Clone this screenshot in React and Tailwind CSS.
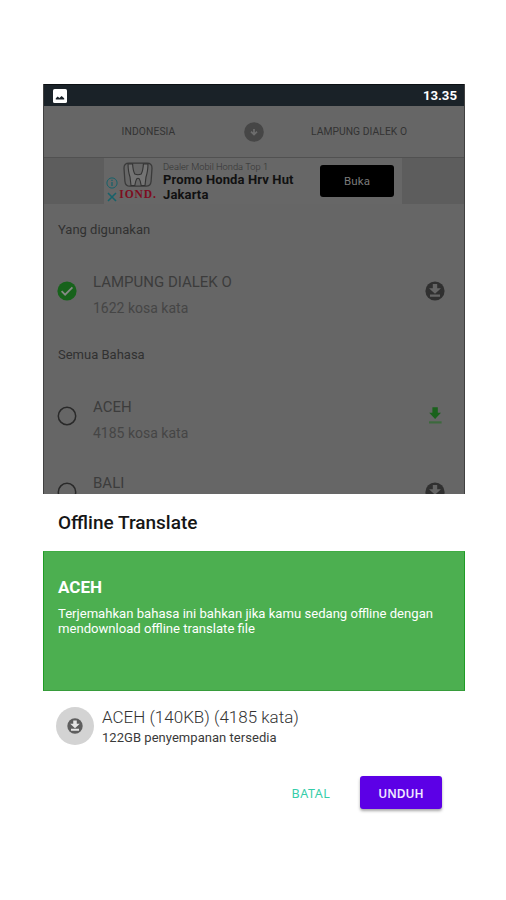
const languages = [
  { name: "ACEH", words: "4185 kosa kata", icon: "arrow" },
  { name: "BALI", icon: "circle" },
];

function DownloadCircle({ className, arrow }) {
  return (
    <svg viewBox="0 0 20 20" className={className}>
      <circle cx="10" cy="10" r="9.6" fill="currentColor" />
      <path
        d="M7.8 3h4.4v4.200h3.800L10 12.800 4 7.200h3.800zM5 13.400h10v2.400H5z"
        fill={arrow}
      />
    </svg>
  );
}

function DownloadArrow() {
  return (
    <svg viewBox="0 0 20 20" className="h-5 w-5">
      <path d="M7.4 1.2h5.4v5.6h3.2l-5.9 6.3-5.9-6.3h3.2z" fill="#1a621c" />
      <path d="M4 15.3h12.6v2.2H4z" fill="#3c693d" />
    </svg>
  );
}

function StatusBar() {
  return (
    <div className="flex h-[22px] items-center justify-between border-t border-[#0c1013] bg-[#1a2228] pr-[7px] pl-[9px]">
      <svg viewBox="0 0 14 14" className="h-[14px] w-[14px]">
        <rect width="14" height="14" rx="1.6" fill="#fff" />
        <path
          d="M2.8 10.4V9.2l1.9-1.6 1.7 1.3L8.6 7l2.6 2.2v1.2z"
          fill="#1a2228"
        />
      </svg>
      <span className="text-[13.2px] leading-[22px] font-bold text-white">
        13.35
      </span>
    </div>
  );
}

function LanguageBar() {
  return (
    <div className="grid h-[52px] grid-cols-[1fr_20px_1fr] items-center border-b border-[#515151] bg-[#666]">
      <span className="pt-[1px] pl-[9px] text-center text-[10.3px] tracking-[0.1px] text-[#333]">
        INDONESIA
      </span>
      <svg viewBox="0 0 20 20" className="h-5 w-5">
        <circle cx="10" cy="10" r="9.8" fill="#464646" />
        <path
          d="M10 7v5M7 9.6l3 3 3-3"
          fill="none"
          stroke="#6d6d6d"
          strokeWidth="1.7"
        />
      </svg>
      <span className="pt-[1px] pr-[10px] text-center text-[10.3px] tracking-[0.05px] whitespace-nowrap text-[#333]">
        LAMPUNG DIALEK O
      </span>
    </div>
  );
}

function HondaLogo() {
  return (
    <svg viewBox="0 0 32 26" className="h-[26px] w-8">
      <path
        d="M7 1.2h18q5.2 0 5 5l-.9 13q-.4 5-5.1 5H8q-4.7 0-5.1-5L2 6.2q-.2-5 5-5z"
        fill="none"
        stroke="#3a3a3a"
        strokeWidth="1.3"
      />
      <path
        d="M6 2h4.6q.4 7 2.2 10 3.2 1.5 6.4 0 1.800-3 2.200-10H26q-.2 8-2 13l-1 8.500h-3.800q-.7-5-2-6.800-1.200-.8-2.400 0-1.300 1.800-2 6.800H9L8 15Q6.200 10 6 2z"
        fill="#747474"
        stroke="#333"
        strokeWidth="1.1"
      />
    </svg>
  );
}

function AdBanner() {
  return (
    <div className="flex h-[46px] justify-center bg-[#5d5d5d] pr-[2px]">
      <div className="flex w-[298px] bg-[#676767] pl-[1px]">
        <div className="flex w-[13px] flex-col items-center gap-[2px] pt-[19px]">
          <svg viewBox="0 0 12 12" className="h-3 w-3">
            <g fill="none" stroke="#17626a">
              <circle cx="6" cy="6" r="5.1" />
              <path d="M6 5v4M6 2.7v1.4" strokeWidth="1.3" />
            </g>
          </svg>
          <svg viewBox="0 0 12 12" className="h-3 w-3">
            <path
              d="M2 2l8 8M10 2l-8 8"
              fill="none"
              stroke="#17626a"
              strokeWidth="1.6"
            />
          </svg>
        </div>
        <div className="flex w-[40px] flex-col items-center pt-[4px]">
          <HondaLogo />
          <span className="pt-[1px] font-['Liberation_Serif',serif] text-[11.5px] leading-[11px] font-bold tracking-[0.9px] text-[#7d0d20]">
            IOND.
          </span>
        </div>
        <div className="ml-[5px] w-[157px] whitespace-nowrap">
          <p className="pt-[3px] text-[9.3px] leading-[11px] font-light text-[#333]">
            Dealer Mobil Honda Top 1
          </p>
          <p className="text-[13px] leading-[15px] font-bold tracking-[0.13px] text-[#111]">
            Promo Honda Hrv Hut
            <br />
            Jakarta
          </p>
        </div>
        <div className="mt-[7px] flex h-8 w-[74px] items-center justify-center rounded-[3px] bg-black pt-[1px] text-[11.5px] tracking-[0.1px] text-[#7a7a7a]">
          Buka
        </div>
      </div>
    </div>
  );
}

function SectionTitle({ children }) {
  return (
    <h2 className="h-[49px] pl-[14px] text-[13px] leading-[51px] font-normal text-[#313131]">
      {children}
    </h2>
  );
}

function LanguageRow({ name, words, icon, selected }) {
  return (
    <div className="flex h-[76px] shrink-0 items-center pr-[19px] pl-[13px]">
      <svg viewBox="0 0 20 20" className="h-5 w-5">
        {selected ? (
          <>
            <circle cx="10" cy="10" r="9.6" fill="#17621b" />
            <path
              d="M4.6 10.2l3.5 3.5 7.3-7.3"
              fill="none"
              stroke="#858985"
              strokeWidth="1.8"
            />
          </>
        ) : (
          <circle
            cx="10"
            cy="10"
            r="8.7"
            fill="none"
            stroke="#292929"
            strokeWidth="1.5"
          />
        )}
      </svg>
      <div className="ml-[16px] h-[59px] flex-1 pt-[7px]">
        <p className="text-[15px] leading-[26px] text-[#3c3c3c]">{name}</p>
        {words && (
          <p className="text-[14px] leading-[26px] text-[#454545]">{words}</p>
        )}
      </div>
      {icon === "arrow" ? (
        <DownloadArrow />
      ) : (
        <DownloadCircle className="h-5 w-5 text-[#303030]" arrow="#656565" />
      )}
    </div>
  );
}

function DownloadSheet() {
  return (
    <section className="bg-white">
      <h1 className="h-[57px] pl-[15px] text-[19px] leading-[58px] font-medium text-[#161616]">
        Offline Translate
      </h1>

      <div className="h-[140px] border border-t-[#3fac43] border-r-[#1f9c25] border-b-[#379c3b] border-l-[#1f9c25] bg-[#4caf50] pt-[24px] pl-[14px] text-white">
        <h3 className="text-[17px] leading-[22px] font-bold">ACEH</h3>
        <p className="pt-[8px] text-[13.1px] leading-[15px] whitespace-nowrap">
          Terjemahkan bahasa ini bahkan jika kamu sedang offline dengan
          <br />
          mendownload offline translate file
        </p>
      </div>

      <div className="flex h-[69px] items-center pl-[13px]">
        <div className="flex h-[38px] w-[38px] items-center justify-center rounded-full bg-[#d3d3d3]">
          <DownloadCircle className="h-4 w-4 text-[#5e5e5e]" arrow="#e6e6e6" />
        </div>
        <div className="ml-[8px] pt-[4px] whitespace-nowrap">
          <p className="text-[17px] leading-[20px] font-light text-[#333]">
            ACEH (140KB) (4185 kata)
          </p>
          <p className="text-[13px] leading-[21px] tracking-[0.04px] text-[#3a3a3a]">
            122GB penyempanan tersedia
          </p>
        </div>
      </div>

      <div className="flex justify-end pt-4 pr-[23px]">
        <button className="w-[98px] pt-[3px] font-['Noto_Sans',sans-serif] text-[12.5px] tracking-[0.6px] text-[#35cda9]">
          BATAL
        </button>
        <button className="h-[33px] w-[82px] rounded-[3px] bg-[#5c00e6] pt-[2px] font-['Noto_Sans',sans-serif] text-[12px] font-semibold text-[#f0e8ff] shadow-[0_2px_3px_rgba(0,0,0,0.35)]">
          UNDUH
        </button>
      </div>
    </section>
  );
}

export default function App() {
  return (
    <div className="h-[900px] w-[506px] overflow-hidden bg-white pt-[84px] pl-[43px] font-[Roboto,sans-serif]">
      <main className="w-[422px]">
        <div className="h-[410px] overflow-hidden border-x border-[#414141] bg-[#666]">
          <StatusBar />
          <LanguageBar />
          <AdBanner />
          <SectionTitle>Yang digunakan</SectionTitle>
          <LanguageRow
            name="LAMPUNG DIALEK O"
            words="1622 kosa kata"
            icon="circle"
            selected
          />
          <SectionTitle>Semua Bahasa</SectionTitle>
          {languages.map((language) => (
            <LanguageRow key={language.name} {...language} />
          ))}
        </div>
        <DownloadSheet />
      </main>
    </div>
  );
}
